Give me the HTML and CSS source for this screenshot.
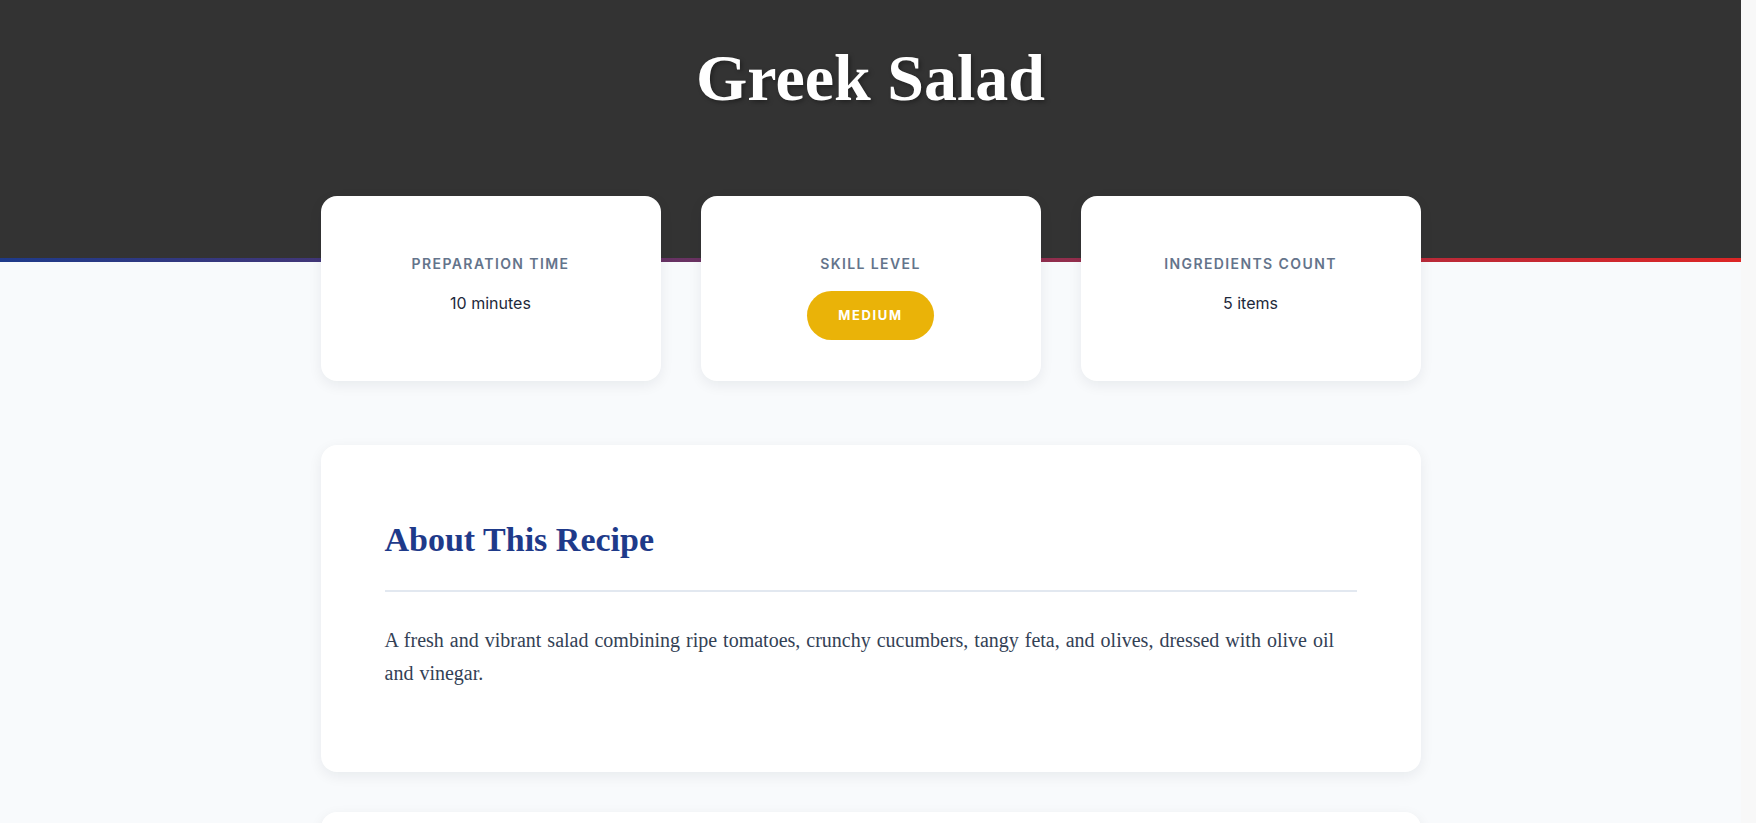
FILE: index.html
```html
<!DOCTYPE html>
<html lang="en">
<head>
<meta charset="utf-8">
<title>Greek Salad</title>
<link rel="stylesheet" href="styles.css">
</head>
<body>
<header class="hero">
  <h1 class="hero-title">Greek Salad</h1>
</header>
<main class="container">
  <section class="stats">
    <div class="stat-card">
      <div class="stat-label">Preparation Time</div>
      <div class="stat-value">10 minutes</div>
    </div>
    <div class="stat-card">
      <div class="stat-label">Skill Level</div>
      <span class="badge">Medium</span>
    </div>
    <div class="stat-card">
      <div class="stat-label">Ingredients Count</div>
      <div class="stat-value">5 items</div>
    </div>
  </section>

  <section class="panel">
    <h2 class="panel-title">About This Recipe</h2>
    <p class="panel-text">A fresh and vibrant salad combining ripe tomatoes, crunchy cucumbers, tangy feta, and olives, dressed with olive oil and vinegar.</p>
  </section>

  <section class="panel">
    <h2 class="panel-title">Ingredients</h2>
    <ul class="ingredient-list">
      <li>Tomatoes</li>
      <li>Cucumbers</li>
      <li>Feta cheese</li>
      <li>Kalamata olives</li>
      <li>Olive oil and vinegar</li>
    </ul>
  </section>

  <section class="panel">
    <h2 class="panel-title">Instructions</h2>
    <p class="panel-text">Chop the tomatoes and cucumbers into bite-sized pieces, add the olives and crumbled feta, then dress with olive oil and vinegar and toss gently before serving.</p>
  </section>
</main>
</body>
</html>
```
FILE: styles.css
```css
* { box-sizing: border-box; }

html {
  background: #f8f8f8;
}

html, body {
  margin: 0;
  padding: 0;
}

body {
  margin-right: 15px;
  background: #f8fafc;
  font-family: Inter, "Noto Sans", sans-serif;
  color: #1e293b;
}

.hero {
  background: #333333;
  padding: 38px 20px 141px;
  text-align: center;
  border-bottom: 4px solid #1e3a8a;
  border-image: linear-gradient(90deg, #1e3a8a, #dc2626) 1;
}

.hero-title {
  margin: 0;
  font-family: "Liberation Serif", "Times New Roman", serif;
  font-weight: 700;
  font-size: 66px;
  line-height: 1.2;
  color: #ffffff;
  text-shadow: 2px 2px 4px rgba(0, 0, 0, 0.35);
}

.container {
  max-width: 1100px;
  margin: 0 auto;
  padding-bottom: 40px;
}

.stats {
  display: grid;
  grid-template-columns: repeat(3, 1fr);
  gap: 40px;
  margin-top: -66px;
  position: relative;
}

.stat-card {
  background: #ffffff;
  border-radius: 16px;
  padding: 58px 24px 41px;
  text-align: center;
  box-shadow: 0 4px 14px rgba(15, 23, 42, 0.07);
}

.stat-label {
  font-size: 14px;
  line-height: 20px;
  font-weight: 600;
  letter-spacing: 1.4px;
  text-transform: uppercase;
  color: #64748b;
  margin-bottom: 17px;
}

.stat-value {
  font-size: 16px;
  line-height: 24px;
  color: #1e293b;
  margin-top: 5px;
}

.badge {
  display: inline-block;
  background: #eab308;
  color: #ffffff;
  font-size: 13px;
  font-weight: 700;
  letter-spacing: 1.6px;
  text-transform: uppercase;
  line-height: 19px;
  padding: 15px 31px;
  border-radius: 25px;
}

.panel {
  background: #ffffff;
  border-radius: 16px;
  padding: 64px;
  margin-top: 64px;
  box-shadow: 0 4px 14px rgba(15, 23, 42, 0.07);
}

.panel + .panel {
  margin-top: 40px;
}

.panel-title {
  margin: 10px 0 32px;
  padding-bottom: 29px;
  border-bottom: 2px solid #e2e8f0;
  font-family: "Liberation Serif", "Times New Roman", serif;
  font-weight: 700;
  font-size: 34px;
  line-height: 42px;
  color: #1e3a8a;
}

.panel-text {
  margin: 0 0 18px;
  font-family: "Liberation Serif", "Times New Roman", serif;
  font-size: 20px;
  word-spacing: 1px;
  line-height: 33px;
  color: #334155;
}

.ingredient-list {
  margin: 0 0 18px;
  padding: 0;
  list-style: none;
  font-family: "Liberation Serif", "Times New Roman", serif;
  font-size: 20px;
  line-height: 33px;
  color: #334155;
}

.ingredient-list li {
  padding: 10px 0;
  border-bottom: 1px solid #f1f5f9;
}
```
